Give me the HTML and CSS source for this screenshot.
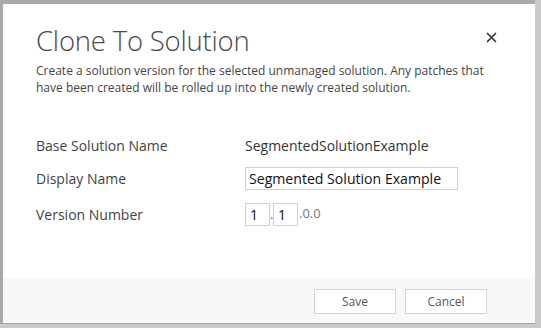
FILE: index.html
```html
<!DOCTYPE html>
<html lang="en">
<head>
  <meta charset="UTF-8">
  <meta name="viewport" content="width=device-width, initial-scale=1.0">
  <title>Clone To Solution</title>
  <link rel="stylesheet" href="styles.css">
</head>
<body>
  <div class="backdrop">
    <section class="dialog">
      <div class="body">
        <div class="header">
          <h1>Clone To Solution</h1>
          <button class="close" aria-label="Close">
            <svg width="11" height="11" viewBox="0 0 11 11">
              <path d="M1 1 L10 10 M10 1 L1 10" stroke="#333" stroke-width="1.6" fill="none"/>
            </svg>
          </button>
        </div>
        <p class="desc">Create a solution version for the selected unmanaged solution. Any patches that have been created will be rolled up into the newly created solution.</p>

        <div class="form">
          <div class="row">
            <span class="label">Base Solution Name</span>
            <span class="value">SegmentedSolutionExample</span>
          </div>
          <div class="row">
            <span class="label">Display Name</span>
            <input class="field" type="text" value="Segmented Solution Example">
          </div>
          <div class="row row-version">
            <span class="label">Version Number</span>
            <div class="version">
              <input class="part" type="text" value="1">
              <span class="dot">.</span>
              <input class="part" type="text" value="1">
              <span class="rest">.0.0</span>
            </div>
          </div>
        </div>
      </div>
      <div class="footer">
        <button class="button">Save</button>
        <button class="button">Cancel</button>
      </div>
    </section>
  </div>
</body>
</html>
```

FILE: styles.css
```css
html, body {
  margin: 0;
  height: 100%;
}

body {
  background-color: #c9c9c9;
  font-family: "Open Sans", "Noto Sans", sans-serif;
  color: #444;
  overflow: hidden;
}

.backdrop {
  padding: 4px 0 0 3px;
  background-color: #a8a8a8;
  width: 535px;
  height: 324px;
  box-sizing: border-box;
}

.dialog {
  width: 532px;
  height: 319px;
  background-color: #fff;
  display: flex;
  flex-direction: column;
}

.body {
  flex: 1;
  padding: 0 33px 0 33px;
}

.header {
  display: flex;
  justify-content: space-between;
  align-items: flex-start;
}

h1 {
  margin: 18px 0 0 0;
  font-size: 27.5px;
  font-weight: 300;
  line-height: 38px;
  color: #4a4a4a;
  letter-spacing: -0.2px;
}

.close {
  border: none;
  background: none;
  padding: 0;
  margin: 27px 5px 0 0;
  width: 11px;
  height: 11px;
  cursor: pointer;
}

.desc {
  margin: 2px 0 0 0;
  font-size: 12px;
  line-height: 17px;
  color: #444;
}

.form {
  margin-top: 37px;
  display: flex;
  flex-direction: column;
  gap: 9px;
}

.row {
  display: flex;
  align-items: center;
  min-height: 24px;
  font-size: 14px;
}

.row-version {
  margin-top: 3px;
}

.label {
  width: 209px;
  flex-shrink: 0;
}

.value {
  color: #333;
}

.field {
  width: 213px;
  height: 23px;
  box-sizing: border-box;
  border: 1px solid #d0d0d0;
  padding: 0 3px;
  font-family: inherit;
  font-size: 14.1px;
  color: #111;
}

.version {
  display: flex;
  align-items: center;
}

.part {
  width: 25px;
  height: 23px;
  box-sizing: border-box;
  border: 1px solid #d0d0d0;
  padding: 0 4px;
  font-family: inherit;
  font-size: 14.1px;
  color: #111;
}

.dot {
  width: 3px;
  font-size: 13px;
  color: #666;
}

.rest {
  font-size: 13px;
  color: #777;
  margin-left: 1px;
  margin-top: -3px;
}

.footer {
  height: 45px;
  background-color: #f8f8f8;
  display: flex;
  justify-content: flex-end;
  align-items: flex-start;
  padding: 11px 48px 0 0;
  gap: 9px;
  box-sizing: border-box;
}

.button {
  width: 82px;
  height: 25px;
  background-color: #fff;
  border: 1px solid #d4d4d4;
  font-family: inherit;
  font-size: 12px;
  color: #555;
  cursor: pointer;
}
```
